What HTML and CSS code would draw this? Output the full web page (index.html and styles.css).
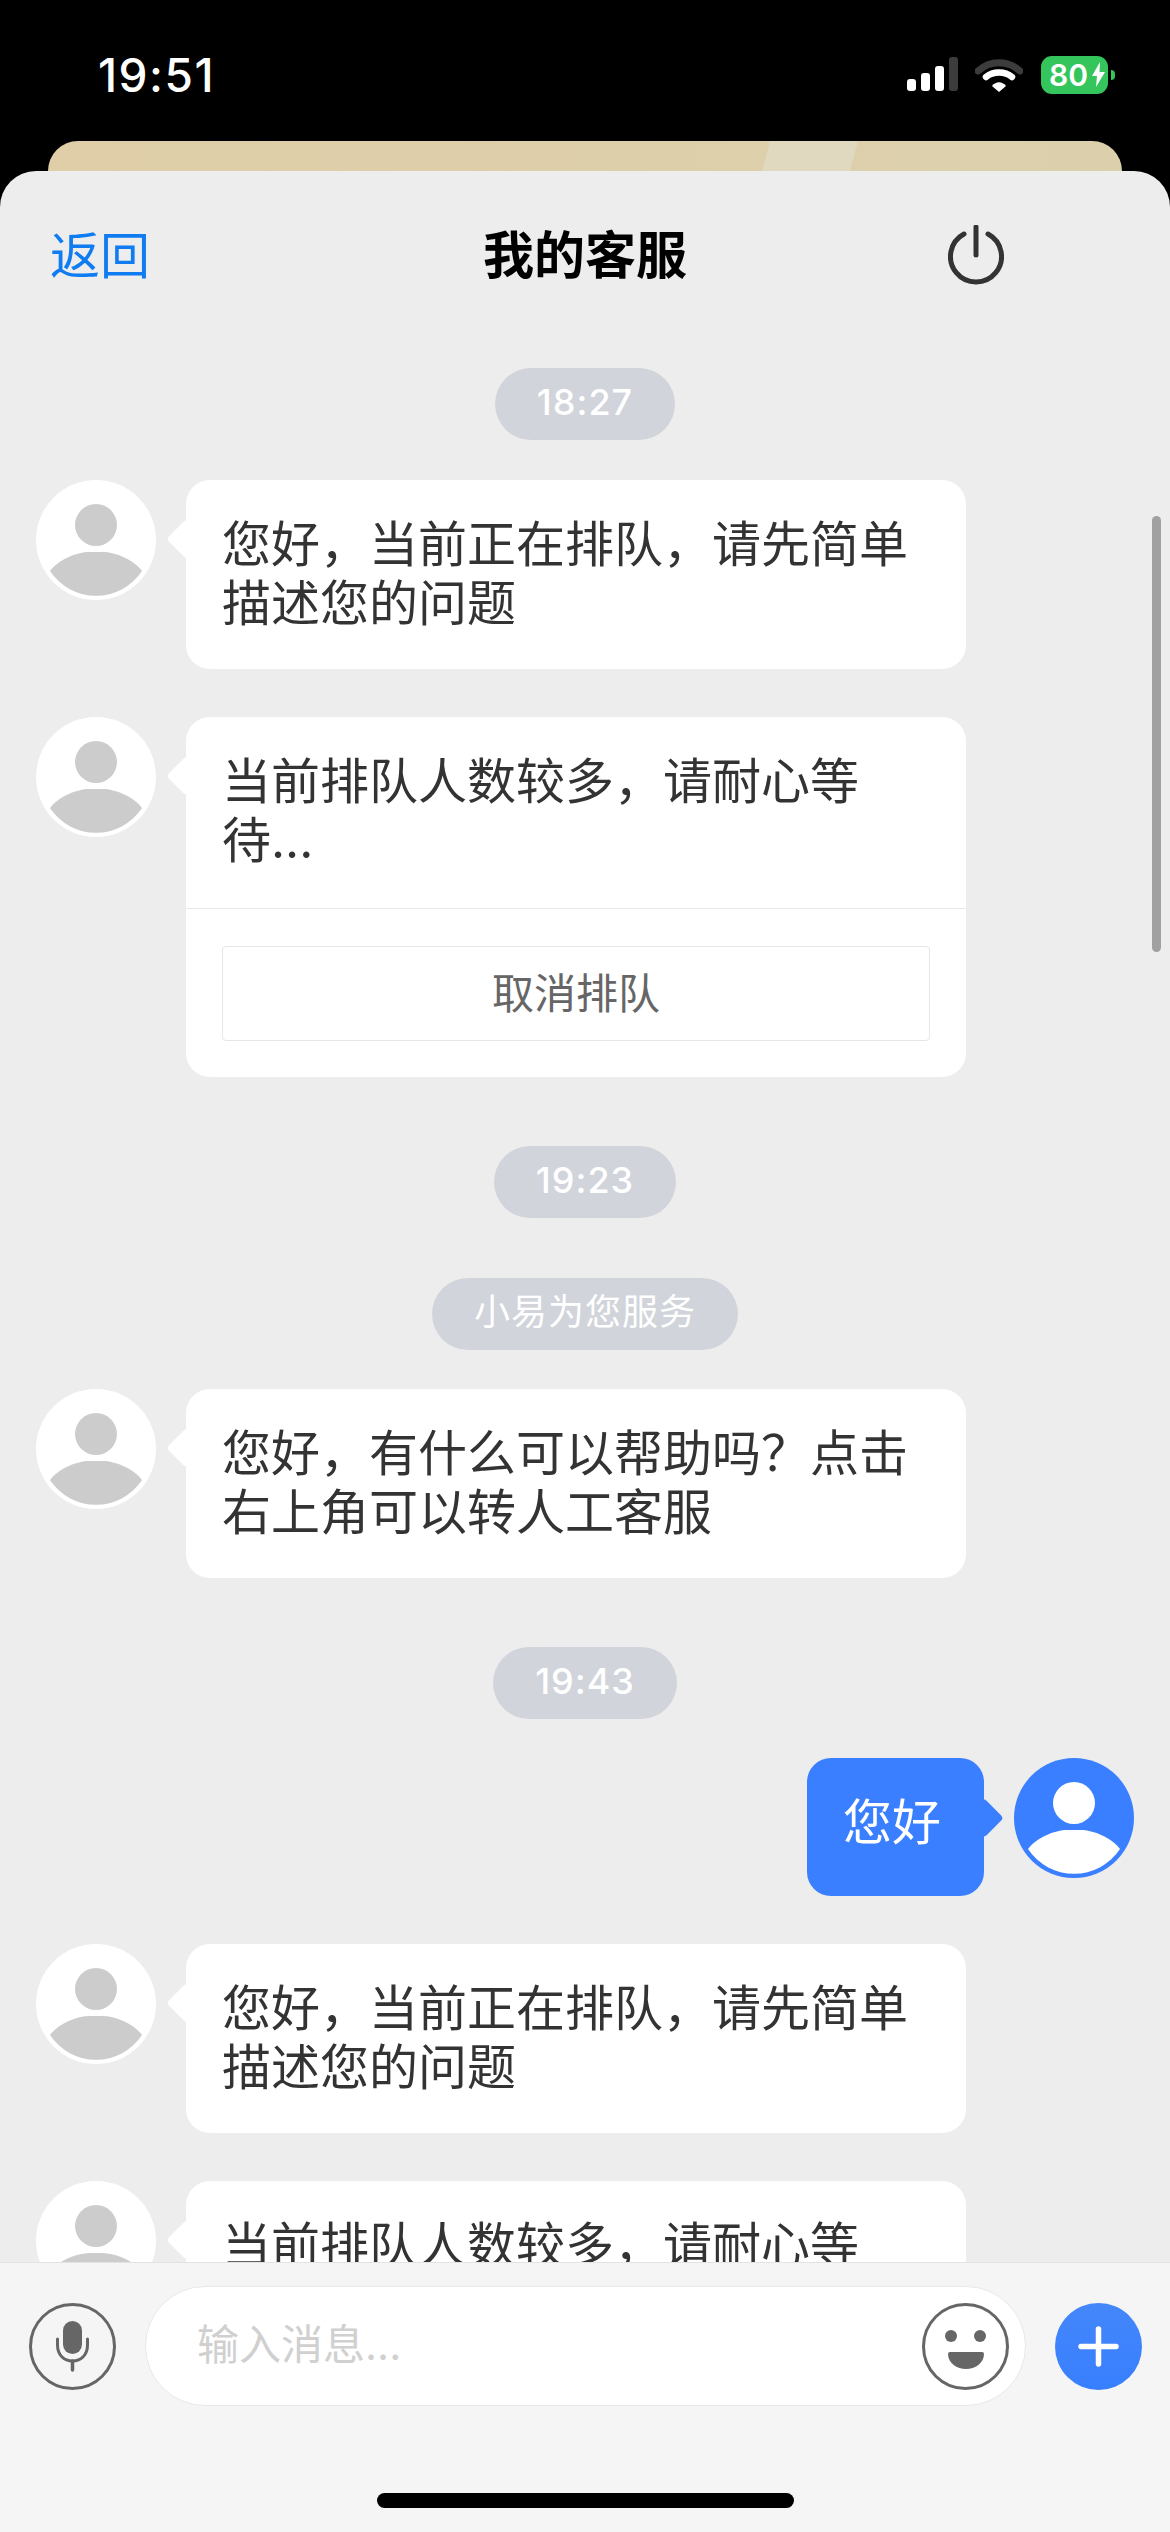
FILE: index.html
```html
<!DOCTYPE html>
<html lang="zh-CN">
<head>
  <meta charset="UTF-8">
  <meta name="viewport" content="width=device-width, initial-scale=1.0">
  <title>我的客服</title>
  <link rel="stylesheet" href="styles.css">
</head>
<body>
  <svg class="sprites" width="0" height="0">
    <symbol id="person" viewBox="0 0 120 120">
      <circle cx="60" cy="45" r="21" fill="currentColor"/>
      <path d="M14 91C22 80 40 72 54 72H66C80 72 98 80 106 91A55 55 0 0 1 14 91Z" fill="currentColor"/>
    </symbol>
  </svg>

  <div class="phone">
    <div class="status-bar">
      <span class="clock">19:51</span>
      <div class="status-icons">
        <svg class="signal" width="51" height="35" viewBox="0 0 51 35">
          <rect x="0" y="22" width="9" height="12" rx="3" fill="#fff"/>
          <rect x="14" y="16" width="9" height="18" rx="3" fill="#fff"/>
          <rect x="28" y="9" width="9" height="25" rx="3" fill="#fff"/>
          <rect x="42" y="0" width="9" height="34" rx="3" fill="#3c3c3c"/>
        </svg>
        <svg class="wifi" width="48" height="35" viewBox="0 0 48 35">
          <path d="M3 14C15 3 33 3 45 14" fill="none" stroke="#3c3c3c" stroke-width="7" stroke-linecap="round"/>
          <path d="M11 20C18 14 30 14 37 20" fill="none" stroke="#fff" stroke-width="6.5" stroke-linecap="round"/>
          <path d="M17 29C21 24 27 24 31 29L24 35Z" fill="#fff"/>
        </svg>
        <div class="battery">
          <span>80</span>
          <svg width="13" height="25" viewBox="0 0 13 25"><path d="M8 0L0 14H5L4 25L13 10H7.5Z" fill="#fff"/></svg>
        </div>
      </div>
    </div>

    <div class="back-card"></div>

    <div class="sheet">
      <div class="nav">
        <span class="nav-back">返回</span>
        <span class="nav-title">我的客服</span>
        <svg class="nav-power" width="56" height="60" viewBox="0 0 56 60">
          <path d="M16 9A25.5 25.5 0 1 0 40 9" fill="none" stroke="#333" stroke-width="5" stroke-linecap="round"/>
          <path d="M28 2V30" fill="none" stroke="#333" stroke-width="5" stroke-linecap="round"/>
        </svg>
      </div>

      <div class="chat">
        <div class="chat-list">
          <div class="pill">18:27</div>

          <div class="msg">
            <div class="avatar"><svg width="120" height="120"><use href="#person"/></svg></div>
            <div class="bubble"><div class="bubble-text">您好，当前正在排队，请先简单描述您的问题</div></div>
          </div>

          <div class="msg">
            <div class="avatar"><svg width="120" height="120"><use href="#person"/></svg></div>
            <div class="bubble">
              <div class="bubble-text">当前排队人数较多，请耐心等待...</div>
              <div class="bubble-action"><div class="cancel-btn">取消排队</div></div>
            </div>
          </div>

          <div class="pill">19:23</div>
          <div class="pill pill-note">小易为您服务</div>

          <div class="msg">
            <div class="avatar"><svg width="120" height="120"><use href="#person"/></svg></div>
            <div class="bubble"><div class="bubble-text">您好，有什么可以帮助吗？点击右上角可以转人工客服</div></div>
          </div>

          <div class="pill">19:43</div>

          <div class="msg msg-me">
            <div class="avatar"><svg width="120" height="120"><use href="#person"/></svg></div>
            <div class="bubble"><div class="bubble-text">您好</div></div>
          </div>

          <div class="msg">
            <div class="avatar"><svg width="120" height="120"><use href="#person"/></svg></div>
            <div class="bubble"><div class="bubble-text">您好，当前正在排队，请先简单描述您的问题</div></div>
          </div>

          <div class="msg">
            <div class="avatar"><svg width="120" height="120"><use href="#person"/></svg></div>
            <div class="bubble"><div class="bubble-text">当前排队人数较多，请耐心等待...</div></div>
          </div>
        </div>
        <div class="scrollbar"></div>
      </div>

      <div class="input-bar">
        <div class="input-row">
          <svg class="round-icon" width="87" height="87" viewBox="0 0 87 87">
            <circle cx="43.5" cy="43.5" r="42" fill="none" stroke="#666" stroke-width="3"/>
            <rect x="34" y="18" width="19" height="33" rx="9.5" fill="#666"/>
            <path d="M28.5 36V42C28.5 52 35 58 43.5 58C52 58 58.5 52 58.5 42V36" fill="none" stroke="#666" stroke-width="3" stroke-linecap="round"/>
            <path d="M43.5 58V67" fill="none" stroke="#666" stroke-width="3.5" stroke-linecap="round"/>
          </svg>
          <div class="input-box">
            <span class="placeholder">输入消息...</span>
            <svg class="round-icon" width="87" height="87" viewBox="0 0 87 87">
              <circle cx="43.5" cy="43.5" r="42" fill="none" stroke="#666" stroke-width="3"/>
              <circle cx="29" cy="33" r="6" fill="#666"/>
              <circle cx="58" cy="33" r="6" fill="#666"/>
              <path d="M28 49H60Q62 49 62 51C62 60 53 66 44 66C35 66 26 60 26 51Q26 49 28 49Z" fill="#666"/>
            </svg>
          </div>
          <svg class="round-icon" width="87" height="87" viewBox="0 0 87 87">
            <defs>
              <linearGradient id="plus-bg" x1="0" y1="0" x2="0" y2="1">
                <stop offset="0" stop-color="#4487fb"/>
                <stop offset="1" stop-color="#387ffe"/>
              </linearGradient>
            </defs>
            <circle cx="43.5" cy="43.5" r="43.5" fill="url(#plus-bg)"/>
            <path d="M43.5 26V61M26 43.5H61" fill="none" stroke="#fff" stroke-width="5.5" stroke-linecap="round"/>
          </svg>
        </div>
        <div class="home-bar"></div>
      </div>
    </div>
  </div>
</body>
</html>
```

FILE: styles.css
```css
* {
  box-sizing: border-box;
}
body {
  margin: 0;
  background: #000;
  font-family: Inter, "Noto Sans CJK SC", sans-serif;
}
.sprites {
  position: absolute;
}
.phone {
  width: 1170px;
  height: 2532px;
  display: flex;
  flex-direction: column;
  overflow: hidden;
}

/* status bar */
.status-bar {
  height: 141px;
  flex: none;
  padding: 8px 62px 0 98px;
  display: flex;
  justify-content: space-between;
  align-items: center;
  color: #fff;
}
.clock {
  font-size: 46px;
  font-weight: 500;
  letter-spacing: 1.5px;
}
.status-icons {
  display: flex;
  align-items: center;
}
.signal {
  margin-right: 17px;
}
.wifi {
  margin-right: 18px;
}
.battery {
  position: relative;
  width: 67px;
  height: 38px;
  padding-left: 8px;
  gap: 4px;
  border-radius: 11px;
  background: #34c65c;
  display: flex;
  align-items: center;
  font-size: 30px;
  font-weight: 600;
  line-height: 38px;
}
.battery::after {
  content: "";
  position: absolute;
  right: -7px;
  top: 14px;
  width: 4px;
  height: 10px;
  border-radius: 0 5px 5px 0;
  background: #34c65c;
}

/* the card behind the sheet */
.back-card {
  position: relative;
  height: 30px;
  flex: none;
  margin: 0 48px;
  border-radius: 30px 30px 0 0;
  background: linear-gradient(to right, #dfcea8, #dcd0ac);
  overflow: hidden;
}
.back-card::after {
  content: "";
  position: absolute;
  left: 718px;
  top: 0;
  width: 88px;
  height: 30px;
  background: #e0d8bf;
  transform: skewX(-15deg);
}

.sheet {
  flex: 1;
  min-height: 0;
  display: flex;
  flex-direction: column;
  background: #ededed;
  border-radius: 36px 36px 0 0;
  overflow: hidden;
}

/* nav */
.nav {
  height: 168px;
  flex: none;
  padding: 0 50px;
  display: grid;
  grid-template-columns: 1fr auto 1fr;
  align-items: center;
}
.nav-back {
  margin-bottom: 6px;
  color: #0f7cf2;
  font-size: 50px;
}
.nav-title {
  margin-bottom: 6px;
  color: #000;
  font-size: 51px;
  font-weight: 700;
}
.nav-power {
  justify-self: end;
  margin-right: 116px;
}

/* chat */
.chat {
  position: relative;
  flex: 1;
  min-height: 0;
  overflow: hidden;
}
.chat-list {
  padding-top: 29px;
  display: flex;
  flex-direction: column;
}
.scrollbar {
  position: absolute;
  left: 1152px;
  top: 177px;
  width: 9px;
  height: 436px;
  border-radius: 5px;
  background: #a0a0a0;
}
.pill {
  align-self: center;
  height: 72px;
  margin-top: 69px;
  padding: 0 42px;
  border-radius: 36px;
  background: #d1d4da;
  color: #fff;
  font-size: 36px;
  font-weight: 500;
  letter-spacing: 1px;
  line-height: 68px;
}
.pill:first-child {
  margin-top: 0;
  margin-bottom: 1px;
}
.pill + .pill {
  margin-top: 60px;
}
.pill-note {
  font-weight: 400;
}
.msg {
  margin-top: 48px;
  padding: 0 36px;
  display: flex;
  align-items: flex-start;
  gap: 30px;
}
.pill + .msg {
  margin-top: 39px;
}
.avatar {
  width: 120px;
  height: 120px;
  flex: none;
  border-radius: 50%;
  background: #fff;
  color: #ccc;
}
.avatar svg {
  display: block;
}
.bubble {
  position: relative;
  width: 780px;
  border-radius: 24px;
  background: #fff;
  color: #333;
  font-size: 49px;
  line-height: 58.5px;
}
.bubble::before {
  content: "";
  position: absolute;
  left: -14px;
  top: 45px;
  width: 28px;
  height: 28px;
  border-radius: 4px;
  background: inherit;
  transform: rotate(45deg);
}
.bubble-text {
  position: relative;
  padding: 36px;
}
.bubble-action {
  margin-top: 2px;
  padding: 37px 36px 36px;
  border-top: 1px solid #e8e8e8;
}
.cancel-btn {
  height: 95px;
  border: 1px solid #e6e6e6;
  border-radius: 4px;
  color: #666;
  font-size: 42px;
  line-height: 93px;
  text-align: center;
}

/* my own message */
.msg-me {
  flex-direction: row-reverse;
}
.msg-me .avatar {
  background: #3a7fff;
  color: #fff;
}
.msg-me .bubble {
  width: auto;
  background: #3a7fff;
  color: #fff;
}
.msg-me .bubble::before {
  left: auto;
  right: -14px;
  top: 46px;
}
.msg-me .bubble-text {
  padding: 36px 43px 43.5px 36px;
}

/* input bar */
.input-bar {
  height: 270px;
  flex: none;
  padding-top: 23px;
  border-top: 1px solid #e3e3e3;
  background: #f5f5f5;
  display: flex;
  flex-direction: column;
  align-items: center;
}
.input-row {
  width: 100%;
  padding: 0 28px 0 29px;
  display: flex;
  align-items: center;
  gap: 29px;
}
.round-icon {
  flex: none;
}
.input-box {
  flex: 1;
  height: 120px;
  padding: 0 16px 0 51px;
  border: 1px solid #e8e8e8;
  border-radius: 60px;
  background: #fff;
  display: flex;
  justify-content: space-between;
  align-items: center;
}
.placeholder {
  margin-bottom: 10px;
  color: #d0d0d0;
  font-size: 42px;
}
.home-bar {
  width: 417px;
  height: 15px;
  margin-top: 87px;
  border-radius: 8px;
  background: #000;
}
```
